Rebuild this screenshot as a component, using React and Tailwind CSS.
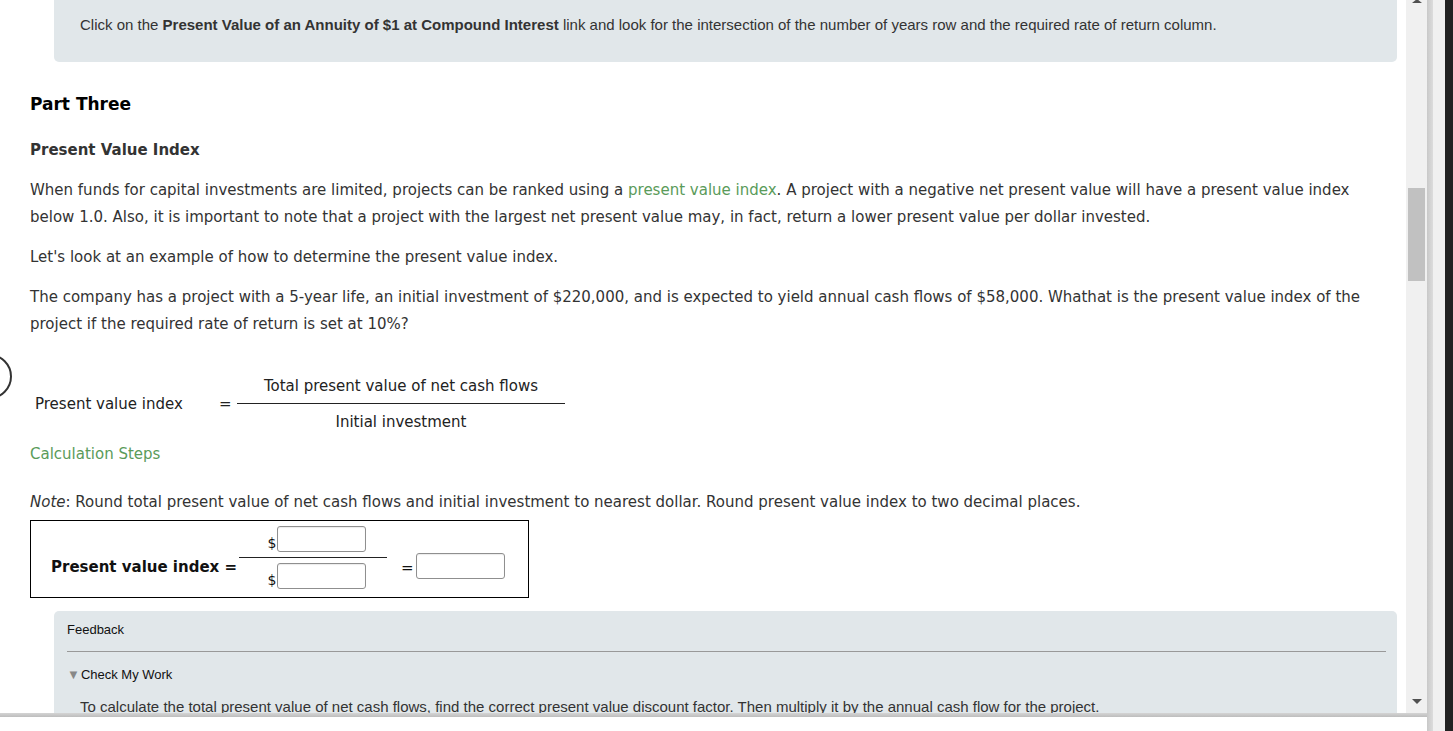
import React from 'react'

const verdana = { fontFamily: '"DejaVu Sans", Verdana, sans-serif' }
const arial = { fontFamily: 'Arial, "Liberation Sans", sans-serif' }

function Field() {
  return <div className="w-[89px] h-[26px] rounded-[3px] border border-[#8f8f8f] bg-white shadow-[inset_0_1px_1px_rgba(0,0,0,0.08)]" />
}

function Scrollbar() {
  return (
    <div className="w-[21px] shrink-0 bg-[#f0f0f0] flex flex-col items-center">
      <div className="h-[10px] w-full flex justify-center">
        <div className="w-0 h-0 border-l-[5px] border-r-[5px] border-b-[4px] border-l-transparent border-r-transparent border-b-[#505050] -mt-[1px]" />
      </div>
      <div className="mt-[178px] w-[17px] h-[93px] bg-[#c1c1c1]" />
      <div className="flex-1" />
      <div className="h-[14px] w-full flex justify-center items-start">
        <div className="w-0 h-0 border-l-[5px] border-r-[5px] border-t-[5px] border-l-transparent border-r-transparent border-t-[#505050]" />
      </div>
    </div>
  )
}

export default function App() {
  return (
    <div className="w-[1453px] h-[731px] overflow-hidden bg-white flex text-[#333]">
      <div className="w-[1427px] flex flex-col shrink-0">
        <div className="h-[713px] flex">
          {/* page */}
          <div className="flex-1 relative overflow-hidden">
            {/* clipped circle */}
            <div className="absolute left-[-33px] top-[354px] w-[45px] h-[45px] rounded-full border-2 border-[#333]" />

            <div className="ml-[54px] mr-[9px] h-[62px] bg-[#e1e7ea] rounded-b-[5px] pl-[26px] pt-[14px] text-[15px] text-[#333]" style={arial}>
              Click on the <b>Present Value of an Annuity of $1 at Compound Interest</b> link and look for the intersection of the number of years row and the required rate of return column.
            </div>

            <div className="pl-[30px] pr-[40px]" style={verdana}>
              <h2 className="mt-[30px] text-[17px] font-bold text-black leading-[24px]">Part Three</h2>
              <h3 className="mt-[24px] text-[15px] font-bold leading-[20px]">Present Value Index</h3>
              <p className="mt-[17px] text-[15px] leading-[27px]">
                When funds for capital investments are limited, projects can be ranked using a <span className="text-[#5a9b5a]">present value index</span>. A project with a negative net present value will have a present value index below 1.0. Also, it is important to note that a project with the largest net present value may, in fact, return a lower present value per dollar invested.
              </p>
              <p className="mt-[13px] text-[15px] leading-[27px]">Let's look at an example of how to determine the present value index.</p>
              <p className="mt-[13px] text-[15px] leading-[27px]">
                The company has a project with a 5-year life, an initial investment of $220,000, and is expected to yield annual cash flows of $58,000. Whathat is the present value index of the project if the required rate of return is set at 10%?
              </p>

              {/* formula */}
              <div className="mt-[38px] flex items-center text-[15px] text-[#222]">
                <div className="w-[189px] pl-[5px]">Present value index</div>
                <div className="w-[18px]">=</div>
                <div className="w-[328px] flex flex-col items-center">
                  <div className="leading-[20px] pb-[7px]">Total present value of net cash flows</div>
                  <div className="w-full h-px bg-[#222]" />
                  <div className="leading-[20px] pt-[8px]">Initial investment</div>
                </div>
              </div>

              <div className="mt-[12px] text-[15px] text-[#5a9b5a] leading-[20px]">Calculation Steps</div>

              <p className="mt-[28px] text-[15px] leading-[20px]"><i>Note</i>: Round total present value of net cash flows and initial investment to nearest dollar. Round present value index to two decimal places.</p>

              <div className="mt-[8px] w-[499px] h-[78px] border border-black flex text-[#111]">
                <div className="ml-[20px] mt-[36px] w-[188px] text-[15px] font-bold leading-[20px]">Present value index =</div>
                <div className="w-[148px] pt-[5px] flex flex-col items-center">
                  <div className="flex items-end pl-[8px]">
                    <span className="text-[14px] leading-[18px] mr-px">$</span><Field />
                  </div>
                  <div className="w-full h-px bg-[#222] mt-[5px] mb-[5px]" />
                  <div className="flex items-end pl-[8px]">
                    <span className="text-[14px] leading-[18px] mr-px">$</span><Field />
                  </div>
                </div>
                <div className="ml-[14px] mt-[37px] text-[15px] w-[15px] leading-[20px]">=</div>
                <div className="mt-[32px]"><Field /></div>
              </div>
            </div>

            <div className="mt-[13px] ml-[54px] mr-[9px] h-[120px] bg-[#e1e7ea] rounded-t-[5px] pl-[13px] pr-[11px] pt-[10px]" style={arial}>
              <div className="text-[#111] text-[13px] leading-[18px]">Feedback</div>
              <div className="mt-[12px] h-px bg-[#999]" />
              <div className="mt-[14px] text-[#111] text-[13px] leading-[18px] flex items-center">
                <span className="text-[#888] text-[13px] mr-[1px]">▼</span>Check My Work
              </div>
              <div className="mt-[14px] pl-[13px] text-[15px] text-[#333] leading-[18px]">
                To calculate the total present value of net cash flows, find the correct present value discount factor. Then multiply it by the annual cash flow for the project.
              </div>
            </div>
          </div>
          <Scrollbar />
        </div>
        <div className="h-[4px] bg-gradient-to-b from-[#d4d4d4] to-[#bdbdbd]" />
        <div className="flex-1 bg-white" />
      </div>
      <div className="w-[6px] shrink-0 bg-gradient-to-r from-[#c8c8c8] to-[#dcdcdc]" />
      <div className="w-[12px] shrink-0 bg-[#f0f0f0]" />
      <div className="w-[8px] shrink-0 bg-[#222]" />
    </div>
  )
}
